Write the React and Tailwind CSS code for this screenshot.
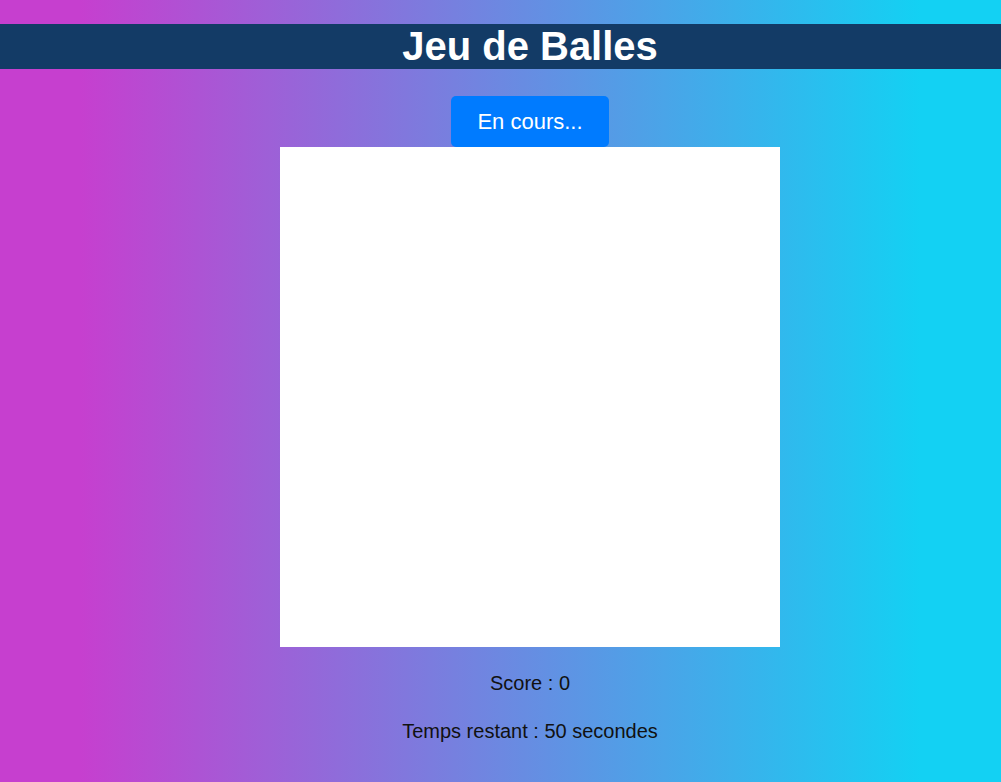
export default function App() {
  return (
    <div
      className="min-h-screen w-full bg-[linear-gradient(to_right,#c63fcf_8%,#13d1f3_92%)] overflow-hidden"
      style={{ fontFamily: '"Liberation Sans", Arial, sans-serif' }}
    >
      <div className="h-[24px]" />
      <h1 className="h-[45px] w-full bg-[#133b66] text-white font-bold text-[40px] leading-[45px] flex justify-center pl-[59px]">
        Jeu de Balles
      </h1>
      <div className="flex flex-col items-center pl-[59px]">
        <button className="mt-[27px] w-[158px] h-[51px] rounded-[5px] bg-[#007bff] text-white text-[22px] leading-[25px]">
          En cours...
        </button>
        <div className="w-[500px] h-[500px] bg-white" />
        <p className="mt-[25px] text-[20px] leading-[23px] text-[#111111]">Score : 0</p>
        <p className="mt-[25px] text-[20px] leading-[23px] text-[#111111]">Temps restant : 50 secondes</p>
      </div>
    </div>
  );
}
